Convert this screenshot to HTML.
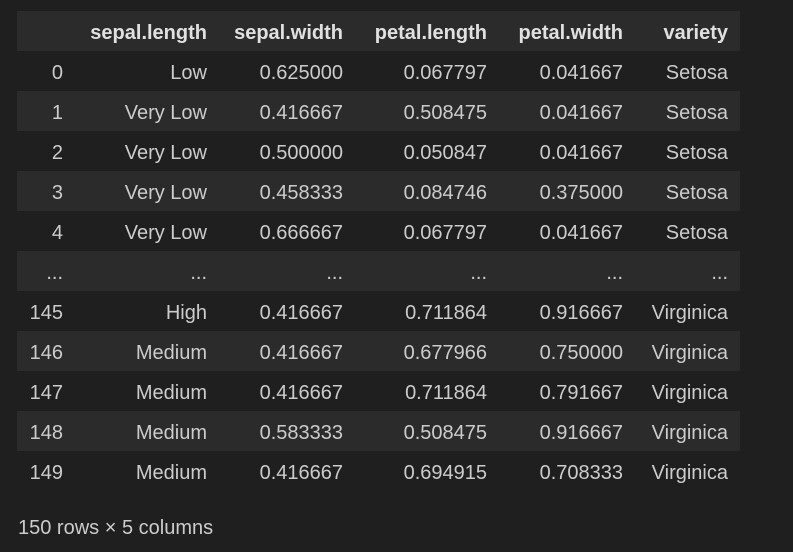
<!DOCTYPE html>
<html><head><style>
html,body{margin:0;padding:0;background:#1f1f1f;width:793px;height:552px;overflow:hidden}
body{font-family:"Liberation Sans",sans-serif;color:#cccccc;font-size:20px}
table{position:absolute;left:17px;top:11px;border-collapse:collapse;width:723px}
td,th{height:40px;padding:4px 12px 0 0;box-sizing:border-box;text-align:right;white-space:nowrap}
th{font-weight:bold;color:#e0e0e0}
tr:nth-child(odd){background:#2b2b2b}
tr:nth-child(even){background:#1f1f1f}
.f{position:absolute;left:18px;top:517px;font-size:20px}
</style></head><body>
<table>
<colgroup><col style="width:58px"><col style="width:144px"><col style="width:136px"><col style="width:144px"><col style="width:136px"><col style="width:105px"></colgroup>
<tr><th></th><th>sepal.length</th><th>sepal.width</th><th>petal.length</th><th>petal.width</th><th>variety</th></tr>
<tr><td>0</td><td>Low</td><td>0.625000</td><td>0.067797</td><td>0.041667</td><td>Setosa</td></tr>
<tr><td>1</td><td>Very Low</td><td>0.416667</td><td>0.508475</td><td>0.041667</td><td>Setosa</td></tr>
<tr><td>2</td><td>Very Low</td><td>0.500000</td><td>0.050847</td><td>0.041667</td><td>Setosa</td></tr>
<tr><td>3</td><td>Very Low</td><td>0.458333</td><td>0.084746</td><td>0.375000</td><td>Setosa</td></tr>
<tr><td>4</td><td>Very Low</td><td>0.666667</td><td>0.067797</td><td>0.041667</td><td>Setosa</td></tr>
<tr><td>...</td><td>...</td><td>...</td><td>...</td><td>...</td><td>...</td></tr>
<tr><td>145</td><td>High</td><td>0.416667</td><td>0.711864</td><td>0.916667</td><td>Virginica</td></tr>
<tr><td>146</td><td>Medium</td><td>0.416667</td><td>0.677966</td><td>0.750000</td><td>Virginica</td></tr>
<tr><td>147</td><td>Medium</td><td>0.416667</td><td>0.711864</td><td>0.791667</td><td>Virginica</td></tr>
<tr><td>148</td><td>Medium</td><td>0.583333</td><td>0.508475</td><td>0.916667</td><td>Virginica</td></tr>
<tr><td>149</td><td>Medium</td><td>0.416667</td><td>0.694915</td><td>0.708333</td><td>Virginica</td></tr>
</table>
<div class="f">150 rows × 5 columns</div>
</body></html>
